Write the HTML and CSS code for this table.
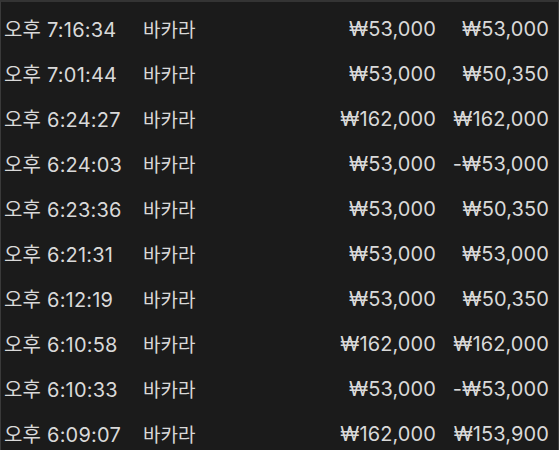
FILE: index.html
```html
<!DOCTYPE html>
<html lang="ko">
<head>
<meta charset="utf-8">
<link rel="stylesheet" href="styles.css">
</head>
<body>
<div class="panel">
  <div class="row"><span class="time">오후 7:16:34</span><span class="game">바카라</span><span class="amt">₩53,000</span><span class="amt">₩53,000</span></div>
  <div class="row"><span class="time">오후 7:01:44</span><span class="game">바카라</span><span class="amt">₩53,000</span><span class="amt">₩50,350</span></div>
  <div class="row"><span class="time">오후 6:24:27</span><span class="game">바카라</span><span class="amt">₩162,000</span><span class="amt">₩162,000</span></div>
  <div class="row"><span class="time">오후 6:24:03</span><span class="game">바카라</span><span class="amt">₩53,000</span><span class="amt">-₩53,000</span></div>
  <div class="row"><span class="time">오후 6:23:36</span><span class="game">바카라</span><span class="amt">₩53,000</span><span class="amt">₩50,350</span></div>
  <div class="row"><span class="time">오후 6:21:31</span><span class="game">바카라</span><span class="amt">₩53,000</span><span class="amt">₩53,000</span></div>
  <div class="row"><span class="time">오후 6:12:19</span><span class="game">바카라</span><span class="amt">₩53,000</span><span class="amt">₩50,350</span></div>
  <div class="row"><span class="time">오후 6:10:58</span><span class="game">바카라</span><span class="amt">₩162,000</span><span class="amt">₩162,000</span></div>
  <div class="row"><span class="time">오후 6:10:33</span><span class="game">바카라</span><span class="amt">₩53,000</span><span class="amt">-₩53,000</span></div>
  <div class="row"><span class="time">오후 6:09:07</span><span class="game">바카라</span><span class="amt">₩162,000</span><span class="amt">₩153,900</span></div>
</div>
</body>
</html>
```
FILE: styles.css
```css
html, body {
  margin: 0;
  padding: 0;
  background: #1b1b1b;
}
.panel {
  box-sizing: border-box;
  width: 559px;
  height: 450px;
  border-top: 2px solid #343434;
  border-left: 1px solid #3a3a3a;
  border-right: 1px solid #3a3a3a;
  padding: 4px 9px 0 3px;
  background: #1b1b1b;
  color: #d9d9d9;
  font-family: "Inter", "Noto Sans CJK KR", sans-serif;
  font-size: 20px;
}
.row {
  display: grid;
  grid-template-columns: 139px 150px 143px 113px;
  height: 45px;
  align-items: center;
}
.time {
  letter-spacing: 0.2px;
}
.game {
  font-size: 19px;
}
.amt {
  text-align: right;
  letter-spacing: 0.1px;
}
```
